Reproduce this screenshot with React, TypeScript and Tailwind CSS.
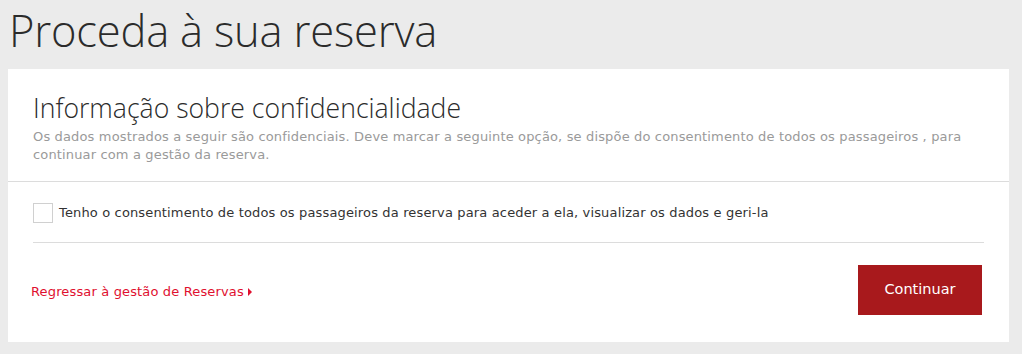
export default function App() {
  return (
    <div className="w-[1022px] h-[354px] bg-[#ebebeb] overflow-hidden">
      <h1 className="pl-[9px] pt-[6px] h-[69px] text-[43.5px] leading-[50px] font-light text-[#2b2b2b] font-['Open_Sans',sans-serif] tracking-[-0.2px]">
        Proceda à sua reserva
      </h1>
      <div className="ml-[8px] w-[1001px] h-[273px] bg-white">
        <div className="px-[25px] pt-[22px] h-[113px] border-b border-[#dcdcdc]">
          <h2 className="text-[26.6px] leading-[34px] font-light text-[#2b2b2b] font-['Open_Sans',sans-serif]">
            Informação sobre confidencialidade
          </h2>
          <p className="mt-[3px] text-[13px] tracking-[0.15px] leading-[18px] text-[#9a9a9a] font-['DejaVu_Sans',sans-serif]">
            Os dados mostrados a seguir são confidenciais. Deve marcar a seguinte opção, se dispõe do consentimento de todos os passageiros , para continuar com a gestão da reserva.
          </p>
        </div>
        <div className="mx-[25px] h-[61px] border-b border-[#dcdcdc] flex items-center gap-[6px]">
          <span className="mt-[2px] w-[20px] h-[20px] border border-[#d0d0d0] bg-white" />
          <span className="mt-[2px] text-[13px] tracking-[0.15px] text-[#333] font-['DejaVu_Sans',sans-serif]">
            Tenho o consentimento de todos os passageiros da reserva para aceder a ela, visualizar os dados e geri-la
          </span>
        </div>
        <div className="pl-[23px] pr-[27px] pt-[22px] flex items-start justify-between">
          <a className="mt-[17px] flex items-center gap-[4px] text-[13px] tracking-[0.15px] text-[#e0102f] font-['DejaVu_Sans',sans-serif]">
            Regressar à gestão de Reservas
            <svg width="4" height="8" viewBox="0 0 4 8">
              <path d="M0 0 L4 4 L0 8 Z" fill="#e0102f" />
            </svg>
          </a>
          <button className="w-[124px] h-[50px] bg-[#a8191c] text-white text-[14.5px] font-['DejaVu_Sans',sans-serif]">
            Continuar
          </button>
        </div>
      </div>
    </div>
  )
}
